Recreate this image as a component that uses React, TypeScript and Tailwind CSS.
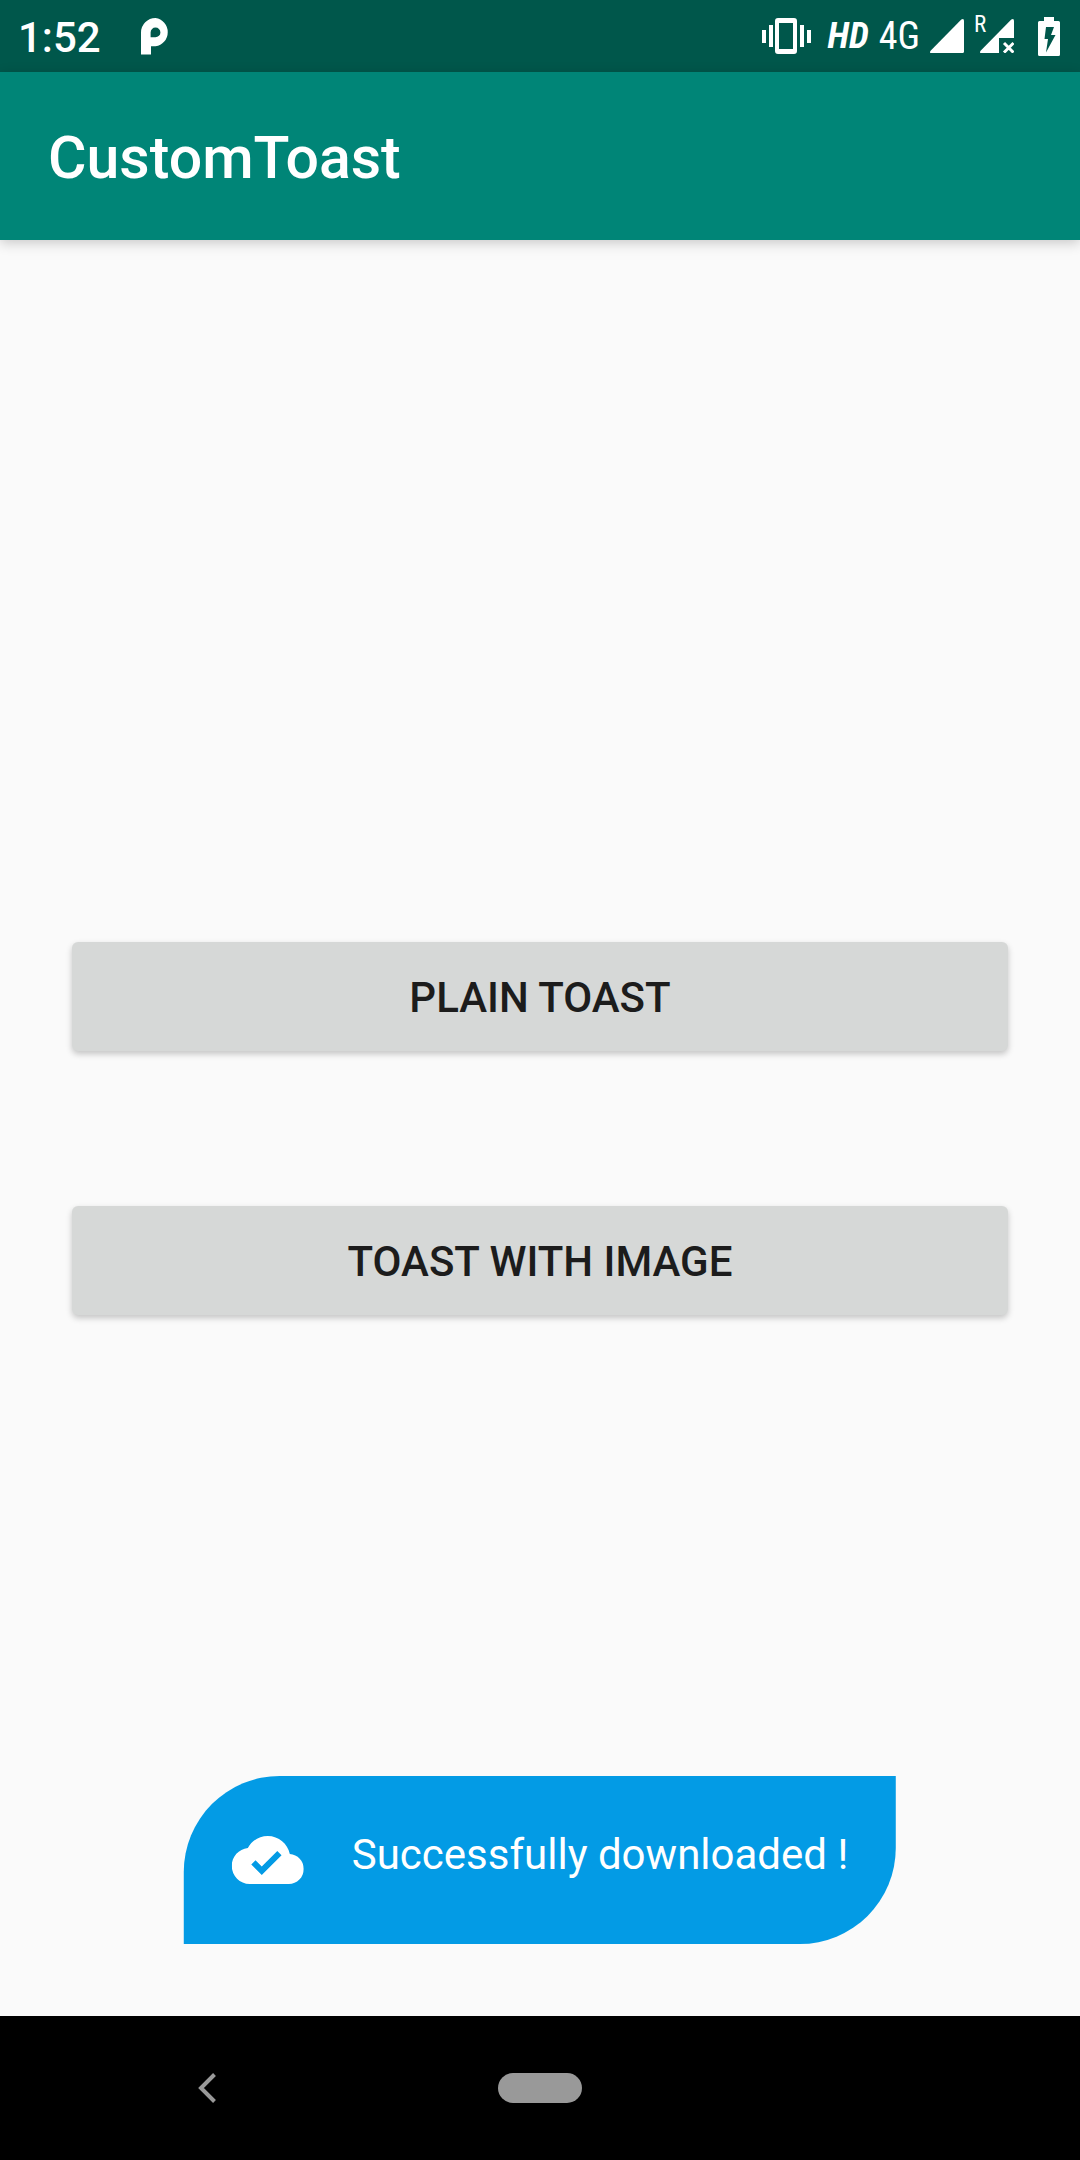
import React from "react";

function VibrateIcon() {
  return (
    <svg className="h-[36px] w-[50px]" viewBox="0 0 50 36" fill="#fff" aria-label="Vibrate">
      <rect x="0" y="12" width="4" height="13" />
      <rect x="7" y="7" width="4" height="22" />
      <path
        fillRule="evenodd"
        d="M16 0h16a3 3 0 0 1 3 3v30a3 3 0 0 1-3 3H16a3 3 0 0 1-3-3V3a3 3 0 0 1 3-3zm1 5v26h14V5z"
      />
      <rect x="38" y="7" width="4" height="22" />
      <rect x="45" y="12" width="4" height="13" />
    </svg>
  );
}

function ParkingIcon() {
  return (
    <svg className="h-[37px] w-[30px]" viewBox="0 0 30 37" fill="#fff" aria-label="Notification">
      <path
        fillRule="evenodd"
        d="M0 36.500V14.500A14.500 14.500 0 0 1 14.500 0 14.300 14.300 0 0 1 14.500 28.300H10V36.500zM14.500 9.500a4.900 4.900 0 0 0-4.900 4.900V19.300h4.900a4.900 4.900 0 0 0 0-9.800z"
      />
    </svg>
  );
}

function SignalIcon() {
  return (
    <svg className="size-[34px]" viewBox="0 0 34 34" fill="#fff" aria-label="Signal">
      <path d="M31.300.6Q34-1 34 2V32.500Q34 34 32.500 34H1.500Q-1 34 .6 31.800z" />
    </svg>
  );
}

function NoSignalIcon() {
  return (
    <svg className="size-[34px]" viewBox="0 0 34 34" aria-label="No data">
      <path fill="#fff" d="M31.300.6Q34-1 34 2V19H19V34H1.500Q-1 34 .6 31.800z" />
      <path stroke="#fff" strokeWidth="3" d="M24 24l9.500 9.500M33.500 24L24 33.500" />
    </svg>
  );
}

function BatteryIcon() {
  return (
    <svg className="h-[39px] w-[22px]" viewBox="0 0 22 39" fill="#fff" aria-label="Battery charging">
      <path
        fillRule="evenodd"
        d="M6 0h10v4h4.500Q22 4 22 5.500v32q0 1.500-1.500 1.500h-19Q0 39 0 37.500v-32Q0 4 1.500 4H6zM8 10L6.500 22H10L8 35.500 17.500 18H13L16 10z"
      />
    </svg>
  );
}

function StatusBar() {
  return (
    <div className="flex h-[72px] items-center justify-between bg-[#00574b] pr-5 pl-[18px] text-white">
      <div className="flex items-center gap-10">
        <time className="pt-1 text-[42px] leading-[48px] font-medium">1:52</time>
        <ParkingIcon />
      </div>
      <div className="flex items-center gap-6">
        <div className="flex items-center gap-4">
          <VibrateIcon />
          <div className="flex items-center gap-[10px] font-['Roboto_Condensed','Liberation_Sans_Narrow',Roboto,sans-serif] text-[38px] leading-[44px]">
            <span className="text-[36px] font-bold italic">HD</span>
            <span>4G</span>
            <SignalIcon />
          </div>
          <div className="relative">
            <span className="absolute -top-[6px] -left-[6px] font-['Roboto_Condensed','Liberation_Sans_Narrow',Roboto,sans-serif] text-[23px] leading-[24px]">
              R
            </span>
            <NoSignalIcon />
          </div>
        </div>
        <BatteryIcon />
      </div>
    </div>
  );
}

function ToastButton({ children }: { children: React.ReactNode }) {
  return (
    <button
      type="button"
      className="h-[109px] w-full rounded-[6px] bg-[#d6d8d7] pt-1 text-[42px] leading-[48px] font-medium text-[#1c1c1c] uppercase shadow-[0_3px_6px_rgba(0,0,0,0.22)]"
    >
      {children}
    </button>
  );
}

function Toast() {
  return (
    <div
      role="status"
      className="absolute bottom-[72px] left-1/2 flex -translate-x-1/2 gap-12 rounded-tl-[96px] rounded-br-[96px] bg-[#039be5] p-12 text-white"
    >
      <svg className="size-[72px] shrink-0" viewBox="0 0 24 24" fill="currentColor" aria-hidden="true">
        <path d="M19.350 10.040C18.670 6.590 15.640 4 12 4 9.110 4 6.600 5.640 5.350 8.040 2.340 8.360 0 10.910 0 14c0 3.310 2.690 6 6 6h13c2.760 0 5-2.240 5-5 0-2.640-2.050-4.780-4.650-4.960zM10 17l-3.500-3.500 1.410-1.410L10 14.170 15.180 9l1.410 1.410L10 17z" />
      </svg>
      <p className="text-[42px] leading-[62px] whitespace-nowrap">Successfully downloaded !</p>
    </div>
  );
}

function NavigationBar() {
  return (
    <nav className="grid h-[144px] grid-cols-[1fr_252px_1fr] items-center justify-items-center bg-black">
      <button type="button" aria-label="Back" className="p-6">
        <svg className="h-[30px] w-[18px]" viewBox="0 0 18 30" fill="none" stroke="#999" strokeWidth="4">
          <path d="M16.500 1.500L3 15l13.500 13.500" />
        </svg>
      </button>
      <button type="button" aria-label="Home" className="h-[30px] w-[84px] rounded-full bg-[#999]" />
    </nav>
  );
}

export default function App() {
  return (
    <div className="flex min-h-screen flex-col bg-[#fafafa] font-[Roboto,sans-serif]">
      <StatusBar />
      <header className="z-10 flex h-[168px] items-center bg-[#008577] px-12 pt-1 shadow-[0_3px_12px_rgba(0,0,0,0.2)]">
        <h1 className="text-[59px] leading-[72px] font-medium text-white">CustomToast</h1>
      </header>
      <main className="relative flex flex-1 flex-col justify-center gap-[155px] px-[72px]">
        <ToastButton>Plain Toast</ToastButton>
        <ToastButton>Toast With Image</ToastButton>
        <Toast />
      </main>
      <NavigationBar />
    </div>
  );
}
